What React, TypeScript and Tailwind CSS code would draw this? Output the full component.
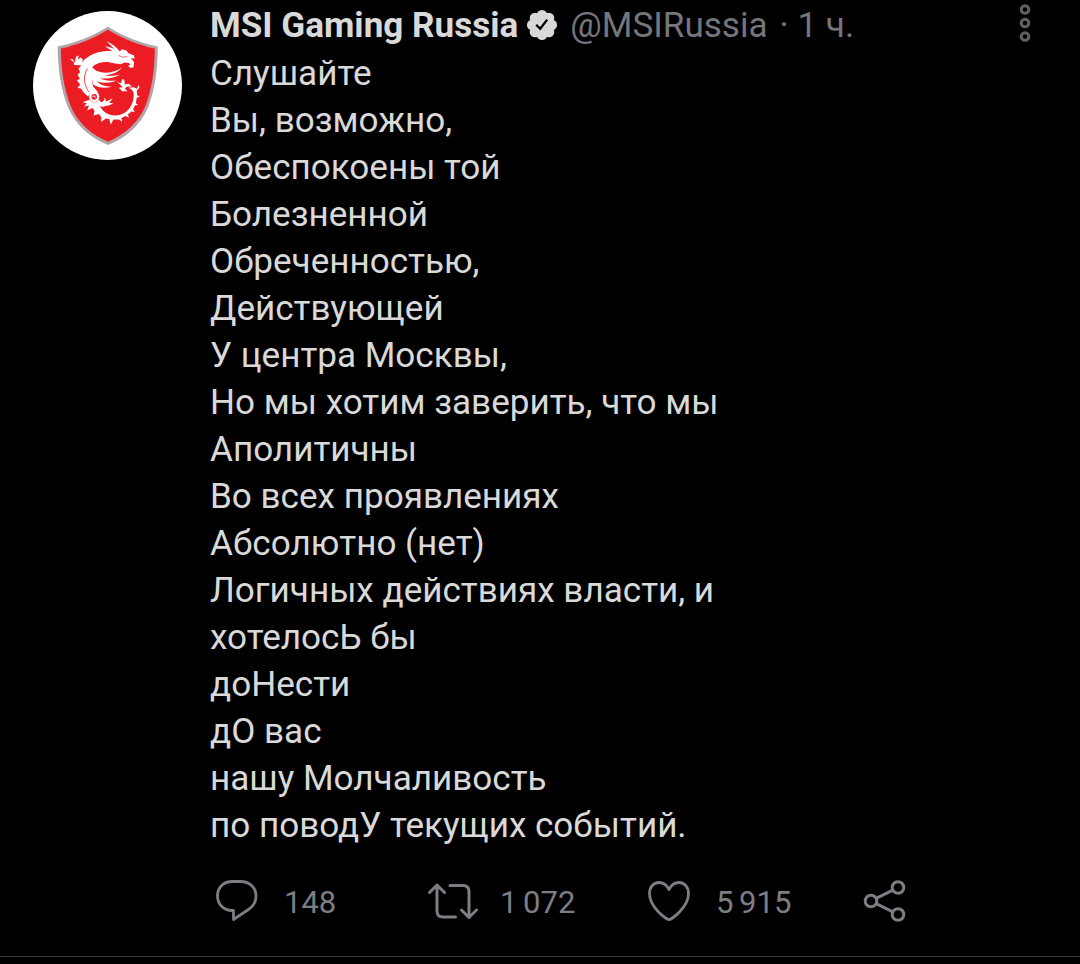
const lines = [
  "Слушайте",
  "Вы, возможно,",
  "Обеспокоены той",
  "Болезненной",
  "Обреченностью,",
  "Действующей",
  "У центра Москвы,",
  "Но мы хотим заверить, что мы",
  "Аполитичны",
  "Во всех проявлениях",
  "Абсолютно (нет)",
  "Логичных действиях власти, и",
  "хотелосЬ бы",
  "доНести",
  "дО вас",
  "нашу Молчаливость",
  "по поводУ текущих событий.",
];

function Avatar() {
  return (
    <svg viewBox="23 17 448 448" className="h-[149px] w-[149px] shrink-0">
      <circle cx="247" cy="241" r="224" fill="#fff" />
      <path
        d="M248 64 C292 92 344 112 398 124 C398 192 390 252 370 304 C346 362 302 398 249 420 C194 398 152 362 128 306 C106 252 98 190 97 124 C152 112 204 92 248 64Z"
        fill="#b3a3a4"
      />
      <path
        d="M248 73 C294 101 340 118 389 130 C389 192 381 250 362 300 C340 354 300 388 249 410 C197 388 158 354 136 302 C116 250 107 192 107 130 C156 118 204 101 248 73Z"
        fill="#ec1c24"
      />
      {/* head, neck and body */}
      <path
        d="M134 161 L143 162 L148 173 L152 155 L160 150 L159 163 L166 157 L173 163 L169 172 C184 155 202 144 225 140 C240 137 251 137 262 138 L240 124 C252 125 261 128 269 133 L244 108 C263 116 276 127 284 139 L290 132 L304 136 L310 144 L326 150 L329 160 L317 159 L327 170 L325 187 L315 188 L309 182 L316 178 L311 173 L298 172 L287 177 L270 175 C247 167 222 168 204 182 C198 190 199 200 208 209 C203 220 199 232 204 244 C210 252 218 258 220 266 C208 258 194 262 189 274 C178 266 171 259 169 251 L157 248 L165 238 L155 226 L164 221 L157 209 L165 201 L160 191 L168 180 L147 179 L145 170Z"
        fill="#fff"
      />
      {/* wing */}
      <path
        d="M200 186 L213 197 C240 208 270 202 290 187 C280 201 262 209 238 210 C254 214 270 212 285 207 C268 219 246 222 224 219 C239 226 258 228 275 226 C254 235 232 234 214 228 C225 239 240 245 260 244 C238 251 217 247 203 237Z"
        fill="#fff"
      />
      <path d="M186 190 C171 218 179 244 191 260" fill="none" stroke="#ec1c24" strokeWidth="2.5" />
      <path d="M280 151 L293 156 L306 154" fill="none" stroke="#ec1c24" strokeWidth="2" />
      {/* coil */}
      <circle cx="207" cy="275" r="12" fill="none" stroke="#fff" strokeWidth="7" />
      <path d="M202 276 C202 270 211 271 210 278" fill="none" stroke="#fff" strokeWidth="3" />
      {/* curled tail */}
      <path
        d="M193 284 C204 297 216 291 222 283 C227 294 233 303 245 301 C232 307 226 305 222 300 C234 323 251 332 273 331 C302 329 321 307 325 280 C329 261 322 252 309 248 L326 246 L335 251 L341 239 L343 247 L335 257 L336 270 L344 274 L335 278 L332 294 L339 300 L329 301 L324 313 L329 321 L319 319 L308 328 L312 338 L301 333 L289 339 L291 350 L281 343 L265 343 L257 358 L252 342 L242 340 L228 351 L228 335 L220 327 L205 331 L208 317 L202 309 L186 316 L191 301 L176 304 L185 294 L172 291 L186 286Z"
        fill="#fff"
      />
      <path
        d="M221 289 C232 293 238 287 239 276 L243 289 L263 279 L252 293 L265 295 L248 302 L232 302Z"
        fill="#fff"
      />
      <path
        d="M275 229 L287 235 L292 221 C298 223 301 231 298 238 L310 236 L321 243 L305 245 L299 250 L307 258 L291 258 L281 248 L293 246 L287 240Z"
        fill="#fff"
      />
    </svg>
  );
}

function VerifiedBadge() {
  return (
    <svg viewBox="0 0 32 32" className="ml-[8px] h-8 w-8 shrink-0">
      <g fill="#d9d9d9">
        <circle cx="16" cy="16" r="12.5" />
        <circle cx="16" cy="6.3" r="5.4" />
        <circle cx="22.9" cy="9.1" r="5.4" />
        <circle cx="25.7" cy="16" r="5.4" />
        <circle cx="22.9" cy="22.9" r="5.4" />
        <circle cx="16" cy="25.7" r="5.4" />
        <circle cx="9.1" cy="22.9" r="5.4" />
        <circle cx="6.3" cy="16" r="5.4" />
        <circle cx="9.1" cy="9.1" r="5.4" />
      </g>
      <path d="M10.2 15.8 L14.2 19.8 L21.2 10.6" fill="none" stroke="#000" strokeWidth="2.3" />
    </svg>
  );
}

function MoreIcon() {
  return (
    <svg viewBox="0 0 14 40" className="mb-[3px] h-10 w-3.5" fill="none" stroke="#5f6063" strokeWidth="3">
      <circle cx="7" cy="6.5" r="3.8" />
      <circle cx="7" cy="20" r="3.8" />
      <circle cx="7" cy="33.5" r="3.8" />
    </svg>
  );
}

function ReplyIcon() {
  return (
    <svg viewBox="0 0 44 44" className="h-11 w-11" fill="none" stroke="#7c7e83" strokeWidth="2.8" strokeLinejoin="round">
      <path d="M17.5 2.5 H25.5 C34.5 2.5 41 8.5 41 17 C41 23 38 27.5 33.5 30.5 L18.5 40.5 V31.5 H17 C8.5 31.5 2.5 25 2.5 17 C2.5 8.5 8.5 2.5 17.5 2.5Z" />
    </svg>
  );
}

function RetweetIcon() {
  return (
    <svg viewBox="0 0 52 40" className="h-10 w-[52px]" fill="none" stroke="#7c7e83" strokeWidth="3" strokeLinecap="round" strokeLinejoin="round">
      <path d="M2.5 11.5 L10 4 L17.5 11.5 M10 4.5 V30 Q10 36 16 36 H28.5" />
      <path d="M23 4.5 H36 Q42 4.5 42 10.5 V36 M34.5 29 L42 36.5 L49.5 29" />
    </svg>
  );
}

function LikeIcon() {
  return (
    <svg viewBox="0 0 44 42" className="h-[42px] w-11" fill="none" stroke="#7c7e83" strokeWidth="2.8" strokeLinejoin="round">
      <path d="M22 39.5 C19.5 39.5 2.5 27.5 2.5 13.5 C2.5 7 6.5 2.5 12 2.5 C16.5 2.5 20 5.5 22 9.5 C24 5.5 27.5 2.5 32 2.5 C37.5 2.5 41.5 7 41.5 13.5 C41.5 27.5 24.5 39.5 22 39.5Z" />
    </svg>
  );
}

function ShareIcon() {
  return (
    <svg viewBox="0 0 44 44" className="h-11 w-11" fill="none" stroke="#7c7e83" strokeWidth="3">
      <circle cx="8" cy="22" r="5.8" />
      <circle cx="35" cy="8.5" r="5.8" />
      <circle cx="35" cy="35.5" r="5.8" />
      <path d="M13.2 19.4 L29.8 11.1 M13.2 24.6 L29.8 32.9" />
    </svg>
  );
}

export default function App() {
  return (
    <div className="flex h-[964px] w-[1080px] flex-col overflow-hidden bg-black font-[Roboto,sans-serif] text-[35.1px] leading-[47px] text-[#d9d9d9]">
      <div className="box-content flex h-[956px] shrink-0 border-b border-[#38393b] pl-[33px]">
        <div className="pt-[11px]">
          <Avatar />
        </div>
        <div className="ml-7 flex flex-1 flex-col pt-px">
          <div className="flex h-[47px] items-center whitespace-nowrap">
            <span className="pt-0.5 font-bold">MSI Gaming Russia</span>
            <VerifiedBadge />
            <span className="ml-3 pt-0.5 text-[#74767b]">@MSIRussia</span>
            <span className="ml-3 pt-0.5 text-[#74767b]">· 1 ч.</span>
            <div className="mr-12 ml-auto">
              <MoreIcon />
            </div>
          </div>
          <div className="mt-0.5 whitespace-nowrap">
            {lines.map((line) => (
              <p key={line}>{line}</p>
            ))}
          </div>
          <div className="mt-7 flex h-[47px] items-center text-[31px] text-[#7c7e83] [word-spacing:-2px]">
            <div className="flex w-[217px] items-center gap-[25px] pl-[5px]">
              <ReplyIcon />
              <span className="mt-1">148</span>
            </div>
            <div className="flex w-[220px] items-center gap-[21px]">
              <RetweetIcon />
              <span className="mt-1">1 072</span>
            </div>
            <div className="flex w-[216px] items-center gap-[25px]">
              <LikeIcon />
              <span className="mt-1">5 915</span>
            </div>
            <ShareIcon />
          </div>
        </div>
      </div>
    </div>
  );
}
